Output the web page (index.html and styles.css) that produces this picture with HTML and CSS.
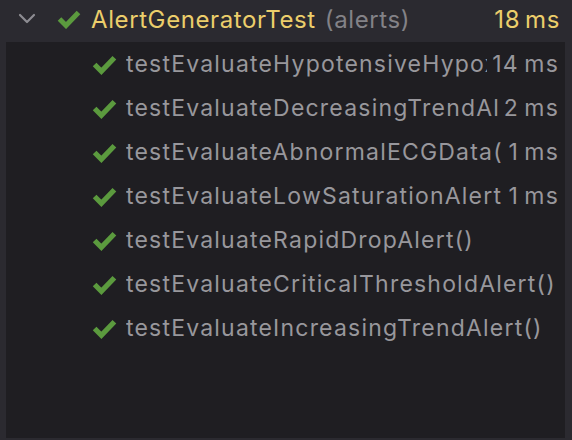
FILE: index.html
```html
<!DOCTYPE html>
<html>
<head>
<meta charset="utf-8">
<link rel="stylesheet" href="styles.css">
</head>
<body>
<div class="header">
  <svg class="chevron" width="18" height="12" viewBox="0 0 18 12"><polyline points="2,2 9,9 16,2" fill="none" stroke="#8d8c92" stroke-width="2.2" stroke-linecap="round" stroke-linejoin="round"/></svg>
  <svg class="check big" width="24" height="20" viewBox="0 0 24 20"><polyline points="2.5,10 9,16.5 21.5,3.5" fill="none" stroke="#5b9a3e" stroke-width="5" stroke-linejoin="miter"/></svg>
  <span class="suite">AlertGeneratorTest</span>
  <span class="pkg">(alerts)</span>
  <span class="total">18&#8201;ms</span>
</div>
<div class="panel">
  <div class="row"><svg class="check" width="25" height="21" viewBox="0 0 24 20"><polyline points="2.5,10 9,16.5 21.5,3.5" fill="none" stroke="#5b9a3e" stroke-width="5"/></svg><span class="name">testEvaluateHypotensiveHypoxemiaAlert()</span><span class="time">14&#8201;ms</span></div>
  <div class="row"><svg class="check" width="25" height="21" viewBox="0 0 24 20"><polyline points="2.5,10 9,16.5 21.5,3.5" fill="none" stroke="#5b9a3e" stroke-width="5"/></svg><span class="name">testEvaluateDecreasingTrendAlert()</span><span class="time">2&#8201;ms</span></div>
  <div class="row"><svg class="check" width="25" height="21" viewBox="0 0 24 20"><polyline points="2.5,10 9,16.5 21.5,3.5" fill="none" stroke="#5b9a3e" stroke-width="5"/></svg><span class="name">testEvaluateAbnormalECGData()</span><span class="time">1&#8201;ms</span></div>
  <div class="row"><svg class="check" width="25" height="21" viewBox="0 0 24 20"><polyline points="2.5,10 9,16.5 21.5,3.5" fill="none" stroke="#5b9a3e" stroke-width="5"/></svg><span class="name">testEvaluateLowSaturationAlert()</span><span class="time">1&#8201;ms</span></div>
  <div class="row"><svg class="check" width="25" height="21" viewBox="0 0 24 20"><polyline points="2.5,10 9,16.5 21.5,3.5" fill="none" stroke="#5b9a3e" stroke-width="5"/></svg><span class="name">testEvaluateRapidDropAlert()</span></div>
  <div class="row"><svg class="check" width="25" height="21" viewBox="0 0 24 20"><polyline points="2.5,10 9,16.5 21.5,3.5" fill="none" stroke="#5b9a3e" stroke-width="5"/></svg><span class="name">testEvaluateCriticalThresholdAlert()</span></div>
  <div class="row"><svg class="check" width="25" height="21" viewBox="0 0 24 20"><polyline points="2.5,10 9,16.5 21.5,3.5" fill="none" stroke="#5b9a3e" stroke-width="5"/></svg><span class="name">testEvaluateIncreasingTrendAlert()</span></div>
</div>
</body>
</html>
```

FILE: styles.css
```css
html, body {
  margin: 0;
  padding: 0;
  background: #2b2a30;
  width: 572px;
  height: 440px;
  overflow: hidden;
  font-family: Inter, "Noto Sans", sans-serif;
}
.header {
  height: 42px;
  display: flex;
  align-items: center;
  padding: 0 12px 0 18px;
  font-size: 24px;
  letter-spacing: 0.6px;
  white-space: nowrap;
}
.chevron {
  flex: none;
  margin-top: -4px;
}
.check {
  flex: none;
  display: block;
}
.check.big {
  margin-left: 21px;
  margin-right: 10px;
  margin-top: -4px;
}
.suite {
  color: #ecce6b;
  margin-top: -3px;
}
.pkg {
  color: #838287;
  margin-left: 9px;
  margin-top: -3px;
}
.total {
  color: #ecce6b;
  margin-left: auto;
  margin-top: -3px;
}
.panel {
  margin: 0 7px 2px 6px;
  height: 396px;
  background: #1f1e22;
  padding: 0 6px 0 86px;
  box-sizing: border-box;
}
.row {
  height: 44px;
  display: flex;
  align-items: center;
  font-size: 23px;
  letter-spacing: 1.2px;
  color: #98979c;
  white-space: nowrap;
}
.row .check {
  margin-right: 9px;
}
.name {
  flex: 1;
  overflow: hidden;
  min-width: 0;
}
.time {
  flex: none;
  margin-left: 5px;
}
```
